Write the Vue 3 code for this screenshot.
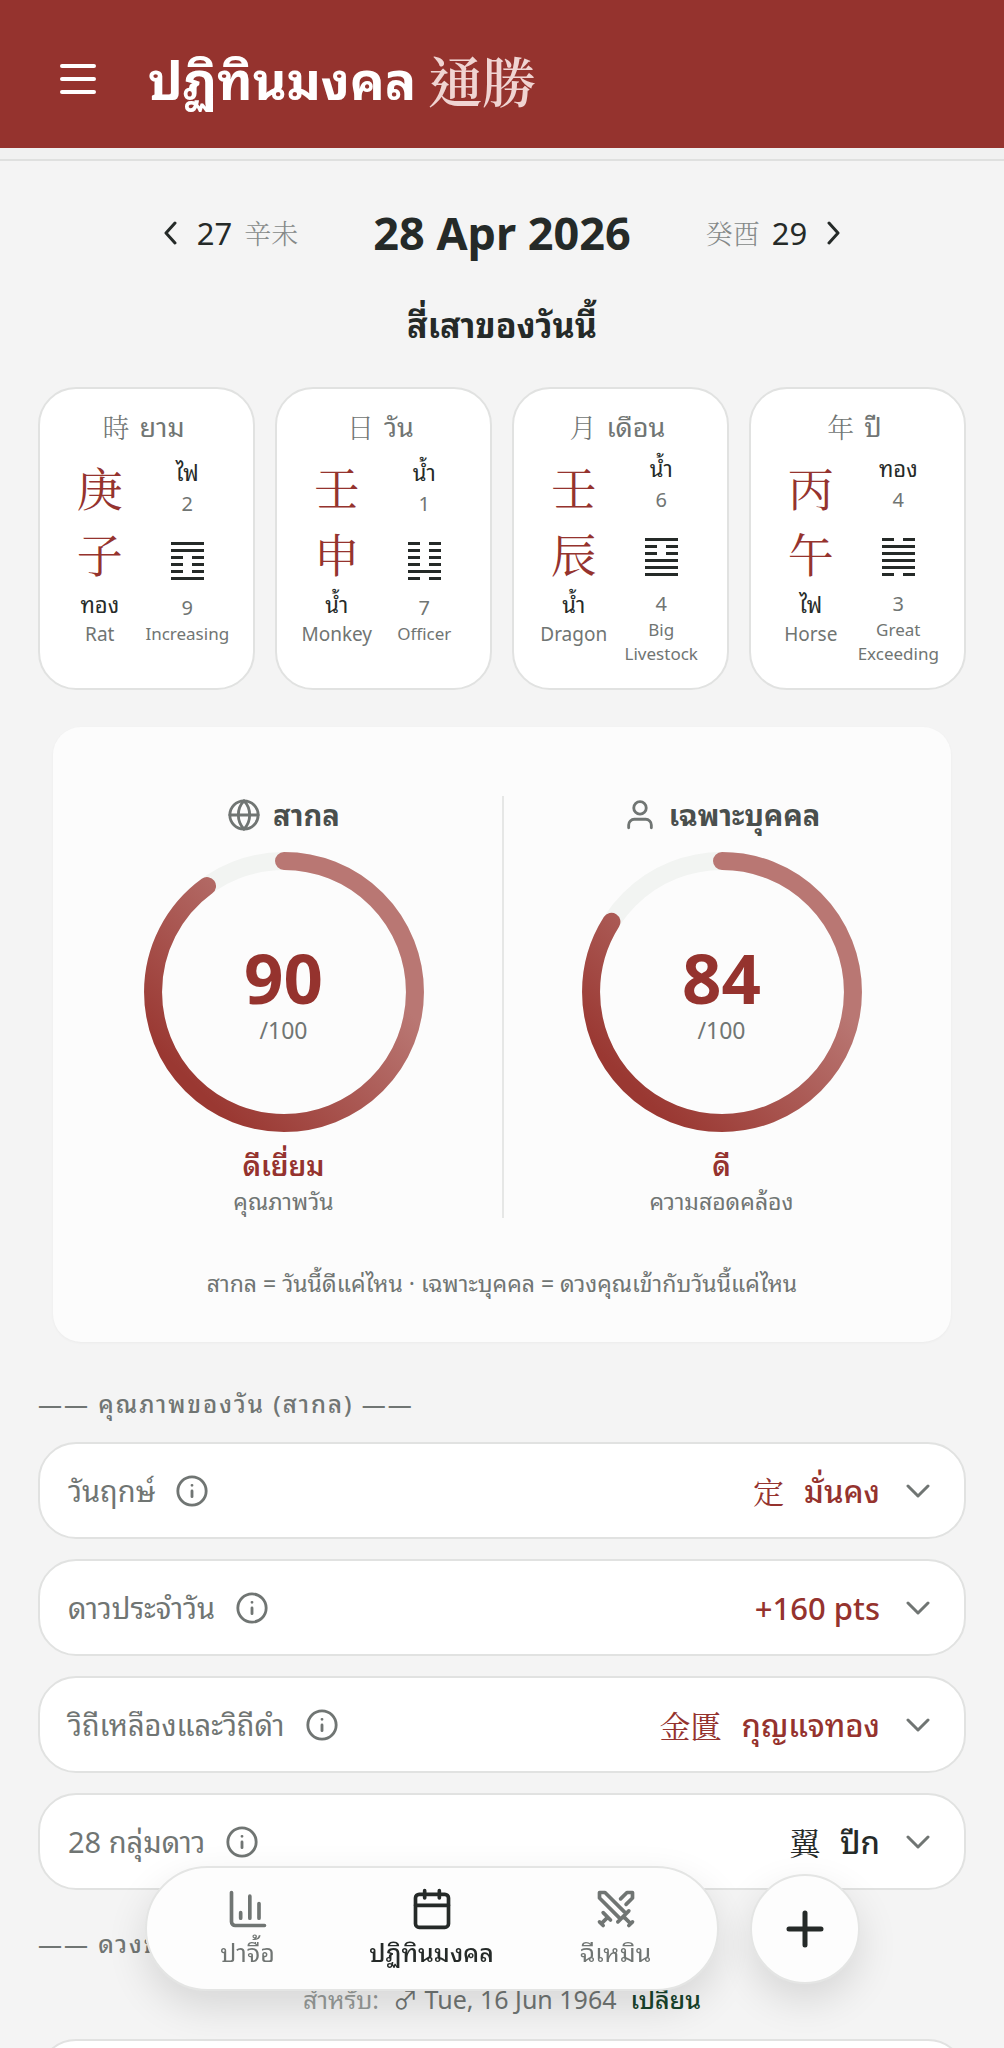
<script setup>
import { ref } from 'vue'

const pillars = [
  {
    han: '時', name: 'ยาม', stem: '庚', branch: '子', branchElement: 'ทอง', animal: 'Rat',
    element: 'ไฟ', top: 2, bottom: 9, hexagram: '110001', hexName: 'Increasing',
  },
  {
    han: '日', name: 'วัน', stem: '壬', branch: '申', branchElement: 'น้ำ', animal: 'Monkey',
    element: 'น้ำ', top: 1, bottom: 7, hexagram: '000010', hexName: 'Officer',
  },
  {
    han: '月', name: 'เดือน', stem: '壬', branch: '辰', branchElement: 'น้ำ', animal: 'Dragon',
    element: 'น้ำ', top: 6, bottom: 4, hexagram: '100111', hexName: 'Big Livestock',
  },
  {
    han: '年', name: 'ปี', stem: '丙', branch: '午', branchElement: 'ไฟ', animal: 'Horse',
    element: 'ทอง', top: 4, bottom: 3, hexagram: '011110', hexName: 'Great Exceeding',
  },
]

const scores = [
  { id: 'universal', title: 'สากล', value: 90, grade: 'ดีเยี่ยม', caption: 'คุณภาพวัน' },
  { id: 'personal', title: 'เฉพาะบุคคล', value: 84, grade: 'ดี', caption: 'ความสอดคล้อง' },
]

const rows = [
  { label: 'วันฤกษ์', han: '定', value: 'มั่นคง', good: true },
  { label: 'ดาวประจำวัน', han: '', value: '+160 pts', good: true },
  { label: 'วิถีเหลืองและวิถีดำ', han: '金匱', value: 'กุญแจทอง', good: true },
  { label: '28 กลุ่มดาว', han: '翼', value: 'ปีก', good: false },
]

const tabs = [
  { id: 'bazi', label: 'ปาจื้อ' },
  { id: 'calendar', label: 'ปฏิทินมงคล' },
  { id: 'qimen', label: 'ฉีเหมิน' },
]

const activeTab = ref('calendar')
</script>

<template>
  <div class="page">
    <header class="topbar">
      <button class="icon-btn" aria-label="เมนู">
        <svg width="44" height="44" viewBox="0 0 44 44" stroke-width="4">
          <path d="M6 8h32M6 21h32M6 34h32" />
        </svg>
      </button>
      <h1><span>ปฏิทินมงคล</span><span class="han">通勝</span></h1>
    </header>
    <div class="strip"></div>

    <main>
      <nav class="dates">
        <button class="day-btn">
          <svg class="arrow" viewBox="0 0 14 24"><path d="M12 2 3 12l9 10" /></svg>
          <span>27</span>
          <span class="han">辛未</span>
        </button>
        <h2 class="today">28 Apr 2026</h2>
        <button class="day-btn">
          <span class="han">癸酉</span>
          <span>29</span>
          <svg class="arrow" viewBox="0 0 14 24"><path d="m2 2 9 10L2 22" /></svg>
        </button>
      </nav>

      <h2 class="pillars-title">สี่เสาของวันนี้</h2>
      <section class="pillars">
        <article v-for="p in pillars" :key="p.han" class="pillar">
          <h3><span class="han">{{ p.han }}</span><span>{{ p.name }}</span></h3>
          <div class="pillar-body">
            <div class="stem-col">
              <span class="han big">{{ p.stem }}</span>
              <span class="han big">{{ p.branch }}</span>
              <span class="element">{{ p.branchElement }}</span>
              <span class="animal">{{ p.animal }}</span>
            </div>
            <div class="hex-col">
              <span class="element">{{ p.element }}</span>
              <span class="number">{{ p.top }}</span>
              <div class="hexagram">
                <i v-for="(line, i) in p.hexagram" :key="i" :class="{ broken: line === '0' }"></i>
              </div>
              <span class="number">{{ p.bottom }}</span>
              <span class="hex-name">{{ p.hexName }}</span>
            </div>
          </div>
        </article>
      </section>

      <section class="panel">
        <div class="scores">
          <div v-for="s in scores" :key="s.id" class="score">
            <h3>
              <svg v-if="s.id === 'universal'" class="line-icon" viewBox="0 0 24 24">
                <circle cx="12" cy="12" r="10" />
                <path d="M12 2a14.5 14.5 0 0 0 0 20 14.5 14.5 0 0 0 0-20M2 12h20" />
              </svg>
              <svg v-else class="line-icon" viewBox="0 0 24 24">
                <circle cx="12" cy="7" r="4.4" />
                <path d="M4 21v-2a4 4 0 0 1 4-4h8a4 4 0 0 1 4 4v2" />
              </svg>
              {{ s.title }}
            </h3>
            <div class="ring">
              <svg viewBox="0 0 280 280">
                <defs>
                  <linearGradient :id="`grad-${s.id}`" x1="1" y1="0" x2="0" y2="1">
                    <stop offset="0.3" stop-color="#b97773" />
                    <stop offset="0.85" stop-color="#9a3832" />
                  </linearGradient>
                </defs>
                <circle cx="140" cy="140" r="131" fill="none" stroke="#f2f4f2" stroke-width="18" />
                <path
                  d="M140 9a131 131 0 0 1 0 262a131 131 0 0 1 0-262"
                  fill="none"
                  :stroke="`url(#grad-${s.id})`"
                  stroke-width="18"
                  stroke-linecap="round"
                  pathLength="100"
                  :stroke-dasharray="`${s.value} 100`"
                />
              </svg>
              <div class="ring-text">
                <strong>{{ s.value }}</strong>
                <span>/100</span>
              </div>
            </div>
            <p class="grade">{{ s.grade }}</p>
            <p class="caption">{{ s.caption }}</p>
          </div>
        </div>
        <p class="legend">สากล = วันนี้ดีแค่ไหน · เฉพาะบุคคล = ดวงคุณเข้ากับวันนี้แค่ไหน</p>
      </section>

      <h3 class="divider first">—— คุณภาพของวัน (สากล) ——</h3>
      <div class="rows">
        <div v-for="r in rows" :key="r.label" class="row">
          <span class="row-label">{{ r.label }}</span>
          <button class="icon-btn info" :aria-label="`ข้อมูล ${r.label}`">
            <svg class="line-icon" viewBox="0 0 24 24">
              <circle cx="12" cy="12" r="10" />
              <path d="M12 12v4M12 8h.01" />
            </svg>
          </button>
          <button class="row-value" :class="{ good: r.good }">
            <span v-if="r.han" class="han">{{ r.han }}</span>
            <span>{{ r.value }}</span>
            <svg class="chevron" viewBox="0 0 24 14"><path d="m2 2 10 10L22 2" /></svg>
          </button>
        </div>
      </div>

      <h3 class="divider">—— ดวงของคุณ (เฉพาะบุคคล) ——</h3>
      <p class="person">
        <span class="for">สำหรับ:</span>
        <span>♂ Tue, 16 Jun 1964</span>
        <a href="#">เปลี่ยน</a>
      </p>
      <div class="row"></div>
    </main>

    <div class="dock">
      <nav class="tabs">
        <button
          v-for="tab in tabs"
          :key="tab.id"
          class="tab"
          :class="{ active: tab.id === activeTab }"
          @click="activeTab = tab.id"
        >
          <svg v-if="tab.id === 'bazi'" viewBox="0 0 24 24">
            <path d="M3 3v16a2 2 0 0 0 2 2h16M8 17v-3M13 17V5M18 17V9" />
          </svg>
          <svg v-else-if="tab.id === 'calendar'" viewBox="0 0 24 24">
            <rect x="3" y="4" width="18" height="18" rx="2" />
            <path d="M8 2v4M16 2v4M3 10h18" />
          </svg>
          <svg v-else viewBox="0 0 24 24">
            <path d="M14.5 17.5 3 6V3h3l11.5 11.5M13 19l6-6M16 16l4 4M19 21l2-2M14.5 6.5 18 3h3v3l-3.5 3.5M5 14l4 4M7 17l-3 3M3 19l2 2" />
          </svg>
          <span>{{ tab.label }}</span>
        </button>
      </nav>
      <button class="fab" aria-label="เพิ่ม">
        <svg viewBox="0 0 40 40"><path d="M20 4v32M4 20h32" /></svg>
      </button>
    </div>
  </div>
</template>

<style>
body {
  margin: 0;
  background: #f4f4f4;
}
</style>

<style scoped>
.page {
  height: 100vh;
  overflow: hidden auto;
  scrollbar-width: none;
  font-family: "Noto Sans", "Noto Sans Thai Looped", "Noto Looped Thai", "Loma", "Noto Sans Thai", "Noto Sans CJK TC", sans-serif;
  color: #252a28;
}

h1,
h2,
h3,
p {
  margin: 0;
}

button {
  padding: 0;
  border: 0;
  background: none;
  font: inherit;
  color: inherit;
  cursor: pointer;
}

svg {
  display: block;
  fill: none;
  stroke: currentColor;
  stroke-linecap: round;
  stroke-linejoin: round;
}

.han {
  font-family: "Noto Serif CJK TC", "Noto Sans CJK TC", serif;
  font-weight: 300;
}

.icon-btn {
  display: flex;
}

.topbar {
  display: flex;
  align-items: center;
  gap: 48px;
  padding: 48px 56px 36px;
  background: #95332e;
  color: #fff;
}

.topbar h1 {
  display: flex;
  align-items: center;
  gap: 12px;
  font-size: 52px;
  line-height: 64px;
  font-weight: 700;
}

.topbar .han {
  font-size: 54px;
  font-weight: 600;
  color: #f0d4d2;
}

.strip {
  height: 11px;
  background: #f1f1f1;
  border-bottom: 2px solid #dfe0df;
}

main {
  padding: 42px 38px;
}

.dates {
  display: flex;
  justify-content: center;
  align-items: center;
  gap: 75px;
}

.day-btn {
  display: flex;
  align-items: center;
  gap: 12px;
  font-size: 31px;
  line-height: 40px;
}

.day-btn .han {
  font-size: 27px;
  color: #858988;
}

.arrow {
  width: 14px;
  height: 24px;
  margin: 0 8px 0 0;
  stroke-width: 3;
}

.day-btn .arrow:last-child {
  margin: 0 0 0 8px;
}

.today {
  font-size: 45px;
  line-height: 60px;
  font-weight: 700;
}

.pillars-title {
  margin: 42px 0;
  font-size: 34px;
  line-height: 40px;
  font-weight: 700;
  text-align: center;
}

.pillars {
  display: grid;
  grid-template-columns: repeat(4, 1fr);
  gap: 20px;
}

.pillar {
  padding: 22px 22px 22px 16px;
  border: 2px solid #e1e2e1;
  border-radius: 38px;
  background: #fff;
}

.pillar h3 {
  display: flex;
  justify-content: center;
  align-items: center;
  gap: 10px;
  margin-bottom: 10px;
  font-size: 27px;
  line-height: 32px;
  font-weight: 400;
  color: #707573;
}

.pillar-body {
  display: grid;
  grid-template-columns: 1fr 1fr;
  align-items: center;
}

.stem-col,
.hex-col {
  display: flex;
  flex-direction: column;
  align-items: center;
  text-align: center;
}

.stem-col {
  align-self: start;
}

.hex-col {
  padding-top: 3px;
}

.big {
  font-size: 46px;
  line-height: 66px;
  font-weight: 400;
  color: #95332e;
}

.element {
  font-size: 22px;
  line-height: 30px;
}

.stem-col .element {
  margin-top: 4px;
}

.hex-col .element {
  line-height: 24px;
}

.animal {
  font-size: 19px;
  line-height: 30px;
  color: #707573;
}

.number {
  margin-top: 6px;
  font-size: 20px;
  line-height: 28px;
  color: #707573;
}

.hexagram {
  display: flex;
  flex-direction: column;
  gap: 4px;
  width: 33px;
  margin: 24px 0 8px;
}

.hexagram i {
  height: 3px;
  background: #252a28;
}

.hexagram .broken {
  background: linear-gradient(to right, #252a28 12px, transparent 12px 21px, #252a28 21px);
}

.hex-name {
  font-size: 17px;
  line-height: 24px;
  color: #707573;
}

.panel {
  margin: 37px 15px 0;
  padding: 69px 12px 42px;
  border-radius: 28px;
  background: #fcfcfc;
  box-shadow: 0 1px 3px rgba(0, 0, 0, 0.04);
}

.scores {
  display: grid;
  grid-template-columns: 1fr 1fr;
}

.score {
  display: flex;
  flex-direction: column;
  align-items: center;
}

.score + .score {
  border-left: 2px solid #e6e7e6;
}

.score h3 {
  display: flex;
  align-items: center;
  gap: 12px;
  margin-bottom: 18px;
  font-size: 29px;
  line-height: 38px;
  font-weight: 700;
  color: #4a4f4d;
}

.line-icon {
  width: 34px;
  height: 34px;
  color: #707573;
  stroke-width: 2;
}

.ring {
  display: grid;
  width: 280px;
  height: 280px;
}

.ring > * {
  grid-area: 1 / 1;
}

.ring-text {
  display: flex;
  flex-direction: column;
  align-items: center;
  justify-content: center;
  padding-top: 4px;
  color: #707573;
  font-size: 23px;
  line-height: 34px;
}

.ring-text strong {
  font-size: 69px;
  line-height: 72px;
  color: #95332e;
}

.grade {
  margin-top: 14px;
  font-size: 28px;
  line-height: 38px;
  font-weight: 600;
  color: #95332e;
}

.caption,
.legend {
  font-size: 23px;
  line-height: 34px;
  color: #707573;
}

.legend {
  margin-top: 48px;
  text-align: center;
}

.divider {
  margin: 37px 0 21px;
  font-size: 24px;
  line-height: 34px;
  font-weight: 500;
  letter-spacing: 2px;
  color: #707573;
}

.divider.first {
  margin-top: 45px;
}

.rows {
  display: grid;
  gap: 20px;
}

.row {
  display: flex;
  align-items: center;
  box-sizing: border-box;
  min-height: 97px;
  padding: 0 34px 0 28px;
  border: 2px solid #e1e2e1;
  border-radius: 38px;
  background: #fff;
}

.row-label {
  font-size: 29px;
  line-height: 38px;
  color: #707573;
}

.info {
  margin-left: 20px;
}

.row-value {
  display: flex;
  align-items: center;
  gap: 20px;
  margin-left: auto;
  font-size: 31px;
  line-height: 40px;
  font-weight: 500;
}

.row-value.good {
  color: #95332e;
}

.row-value .han {
  font-weight: 400;
}

.chevron {
  width: 24px;
  height: 14px;
  margin-left: 6px;
  stroke-width: 3;
  color: #707573;
}

.person {
  display: flex;
  justify-content: center;
  gap: 14px;
  margin-bottom: 23px;
  font-size: 25px;
  line-height: 34px;
  color: #707573;
}

.person .for {
  color: #969a98;
}

.person a {
  color: #17432b;
  font-weight: 500;
  text-decoration: none;
}

.dock {
  position: fixed;
  right: 0;
  bottom: 57px;
  left: 0;
  display: flex;
  justify-content: center;
  align-items: center;
  gap: 31px;
}

.tabs {
  display: flex;
  padding: 19px 9px 18px;
  border: 2px solid #e4e5e4;
  border-radius: 63px;
  background: #fdfdfd;
  box-shadow: 0 16px 40px rgba(0, 0, 0, 0.12);
}

.tab {
  display: flex;
  flex-direction: column;
  align-items: center;
  gap: 2px;
  width: 184px;
  font-size: 25px;
  line-height: 38px;
  color: #707573;
}

.tab svg {
  width: 44px;
  height: 44px;
  stroke-width: 2;
}

.tab.active {
  color: #252a28;
  font-weight: 500;
}

.fab {
  display: grid;
  place-items: center;
  width: 110px;
  height: 110px;
  border: 2px solid #e4e5e4;
  border-radius: 50%;
  background: #fdfdfd;
  box-shadow: 0 16px 40px rgba(0, 0, 0, 0.12);
}

.fab svg {
  width: 40px;
  height: 40px;
  stroke-width: 5;
}
</style>
